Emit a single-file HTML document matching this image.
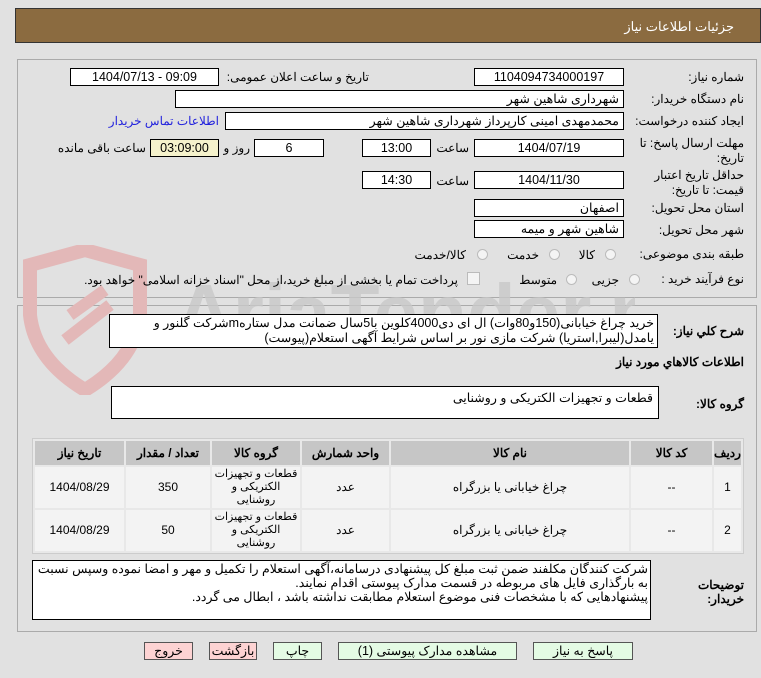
<!DOCTYPE html>
<html><head><meta charset="utf-8"><style>
body{margin:0;width:761px;height:678px;background:#e1e1e1;font-family:Tahoma,"Liberation Sans","Noto Sans CJK SC",sans-serif;font-size:12px;color:#000;position:relative;overflow:hidden}
.a{position:absolute}
.box{position:absolute;background:#fff;border:1px solid #000;box-sizing:border-box;height:18px;line-height:16px;text-align:center;font-size:12.5px}
.lbl{position:absolute;direction:rtl;text-align:right;white-space:nowrap}
.r{direction:rtl;text-align:right;padding-right:4px}
.rad{position:absolute;width:11px;height:11px;border:1px solid #bbb;border-radius:50%;background:#f4f4f4;box-sizing:border-box}
table{border-collapse:separate;border-spacing:2px;position:absolute;left:32px;top:438px;width:712px;background:#e8e8e8;border:1px solid #ccc;direction:rtl;table-layout:fixed}
th{background:#c6c6c6;height:24px;font-weight:bold;font-size:12px;padding:0}
td{background:#f3f3f3;text-align:center;height:41px;font-size:12px;line-height:13px;padding:0;overflow:hidden}
td.g{font-size:11px;line-height:13px}
.btn{position:absolute;top:642px;height:18px;border:1px solid #555;box-sizing:border-box;text-align:center;line-height:16px;font-size:12.5px;background:#e4fbe4}
.pk{background:#fdd3d3}
</style></head><body>
<div class="a" style="left:15px;top:8px;width:746px;height:35px;background:#8b6b40;border:1px solid #333;box-sizing:border-box"></div>
<div class="lbl" style="right:27px;top:19px;color:#fff;font-size:13px">جزئیات اطلاعات نیاز</div>
<div class="a" style="left:17px;top:59px;width:740px;height:239px;border:1px solid #aaa;box-sizing:border-box"></div>
<div class="a" style="left:17px;top:305px;width:740px;height:327px;border:1px solid #aaa;box-sizing:border-box"></div>
<!-- watermark -->
<svg class="a" style="left:15px;top:245px" width="620" height="150"><path d="M15 20 L70 5 L125 20 L125 70 Q120 115 70 145 Q20 115 15 70 Z" fill="none" stroke="#e3b8b8" stroke-width="14"/><path d="M55 70 L90 45 M50 95 L95 60" stroke="#e3b8b8" stroke-width="12"/><text x="160" y="95" font-family="Liberation Sans" font-weight="bold" font-size="80" fill="#c9c9c9" opacity="0.8">AriaTender.net</text></svg>

<div class="lbl" style="right:17px;top:70px">شماره نیاز:</div>
<div class="box" style="left:474px;top:68px;width:150px">1104094734000197</div>
<div class="lbl" style="right:392px;top:70px">تاریخ و ساعت اعلان عمومی:</div>
<div class="box" style="left:70px;top:68px;width:149px">1404/07/13 - 09:09</div>

<div class="lbl" style="right:17px;top:92px">نام دستگاه خریدار:</div>
<div class="box r" style="left:175px;top:90px;width:449px">شهرداری شاهین شهر</div>

<div class="lbl" style="right:17px;top:114px">ایجاد کننده درخواست:</div>
<div class="box r" style="left:225px;top:112px;width:399px">محمدمهدی امینی کارپرداز شهرداری شاهین شهر</div>
<div class="lbl" style="right:542px;top:114px;color:#2222dd">اطلاعات تماس خریدار</div>

<div class="lbl" style="right:17px;top:136px">مهلت ارسال پاسخ: تا</div>
<div class="lbl" style="right:17px;top:151px">تاریخ:</div>
<div class="box" style="left:474px;top:139px;width:150px">1404/07/19</div>
<div class="lbl" style="right:292px;top:141px">ساعت</div>
<div class="box" style="left:362px;top:139px;width:69px">13:00</div>
<div class="box" style="left:254px;top:139px;width:70px">6</div>
<div class="lbl" style="right:511px;top:141px">روز و</div>
<div class="box" style="left:150px;top:139px;width:69px;background:#f5f2cc">03:09:00</div>
<div class="lbl" style="right:615px;top:141px">ساعت باقی مانده</div>

<div class="lbl" style="right:17px;top:168px">حداقل تاریخ اعتبار</div>
<div class="lbl" style="right:17px;top:183px">قیمت: تا تاریخ:</div>
<div class="box" style="left:474px;top:171px;width:150px">1404/11/30</div>
<div class="lbl" style="right:292px;top:174px">ساعت</div>
<div class="box" style="left:362px;top:171px;width:69px">14:30</div>

<div class="lbl" style="right:17px;top:201px">استان محل تحویل:</div>
<div class="box r" style="left:474px;top:199px;width:150px">اصفهان</div>
<div class="lbl" style="right:17px;top:223px">شهر محل تحویل:</div>
<div class="box r" style="left:474px;top:220px;width:150px">شاهین شهر و میمه</div>

<div class="lbl" style="right:17px;top:247px">طبقه بندی موضوعی:</div>
<div class="rad" style="left:605px;top:249px"></div><div class="lbl" style="right:166px;top:248px">کالا</div>
<div class="rad" style="left:549px;top:249px"></div><div class="lbl" style="right:222px;top:248px">خدمت</div>
<div class="rad" style="left:477px;top:249px"></div><div class="lbl" style="right:295px;top:248px">کالا/خدمت</div>

<div class="lbl" style="right:17px;top:272px">نوع فرآیند خرید :</div>
<div class="rad" style="left:629px;top:274px"></div><div class="lbl" style="right:142px;top:273px">جزیی</div>
<div class="rad" style="left:566px;top:274px"></div><div class="lbl" style="right:204px;top:273px">متوسط</div>
<div class="a" style="left:467px;top:272px;width:11px;height:11px;border:1px solid #bbb;background:#f4f4f4"></div>
<div class="lbl" style="right:303px;top:273px">پرداخت تمام یا بخشی از مبلغ خرید،از محل "اسناد خزانه اسلامی" خواهد بود.</div>

<div class="lbl" style="right:17px;top:324px;font-weight:bold">شرح کلي نياز:</div>
<div class="a" style="left:109px;top:314px;width:549px;height:34px;background:#fff;border:1px solid #000;box-sizing:border-box;direction:rtl;text-align:right;padding:1px 3px;line-height:15px;font-size:12.5px">خرید چراغ خیابانی(150و80وات) ال ای دی4000کلوین با5سال ضمانت مدل ستارهmشرکت گلنور و یامدل(لیبرا,استریا) شرکت مازی نور بر اساس شرایط آگهی استعلام(پیوست)</div>
<div class="lbl" style="right:17px;top:355px;font-weight:bold">اطلاعات کالاهاي مورد نياز</div>
<div class="lbl" style="right:17px;top:397px;font-weight:bold">گروه کالا:</div>
<div class="a" style="left:111px;top:386px;width:548px;height:33px;background:#fff;border:1px solid #000;box-sizing:border-box;direction:rtl;text-align:right;padding:3px 5px;font-size:12.5px">قطعات و تجهیزات الکتریکی و روشنایی</div>

<table>
<colgroup><col style="width:27px"><col style="width:81px"><col style="width:238px"><col style="width:87px"><col style="width:88px"><col style="width:84px"><col></colgroup>
<tr><th>ردیف</th><th>کد کالا</th><th>نام کالا</th><th>واحد شمارش</th><th>گروه کالا</th><th>تعداد / مقدار</th><th>تاریخ نیاز</th></tr>
<tr><td>1</td><td>--</td><td>چراغ خیابانی یا بزرگراه</td><td>عدد</td><td class="g">قطعات و تجهیزات<br>الکتریکی و<br>روشنایی</td><td>350</td><td>1404/08/29</td></tr>
<tr><td>2</td><td>--</td><td>چراغ خیابانی یا بزرگراه</td><td>عدد</td><td class="g">قطعات و تجهیزات<br>الکتریکی و<br>روشنایی</td><td>50</td><td>1404/08/29</td></tr>
</table>

<div class="lbl" style="right:17px;top:578px;font-weight:bold">توضیحات</div>
<div class="lbl" style="right:17px;top:592px;font-weight:bold">خریدار:</div>
<div class="a" style="left:32px;top:560px;width:619px;height:60px;background:#fff;border:1px solid #000;box-sizing:border-box;direction:rtl;text-align:right;padding:1px 2px;line-height:14px;font-size:12.5px">شرکت کنندگان مکلفند ضمن ثبت مبلغ کل پیشنهادی درسامانه،آگهی استعلام را  تکمیل و مهر و امضا نموده وسپس نسبت به بارگذاری فایل های مربوطه در قسمت مدارک پیوستی اقدام نمایند.<br>پیشنهادهایی که با مشخصات فنی موضوع استعلام مطابقت نداشته باشد ، ابطال می گردد.</div>

<div class="btn" style="left:533px;width:100px">پاسخ به نیاز</div>
<div class="btn" style="left:338px;width:179px">مشاهده مدارک پیوستی (1)</div>
<div class="btn" style="left:273px;width:49px">چاپ</div>
<div class="btn pk" style="left:209px;width:48px">بازگشت</div>
<div class="btn pk" style="left:144px;width:49px">خروج</div>
</body></html>
